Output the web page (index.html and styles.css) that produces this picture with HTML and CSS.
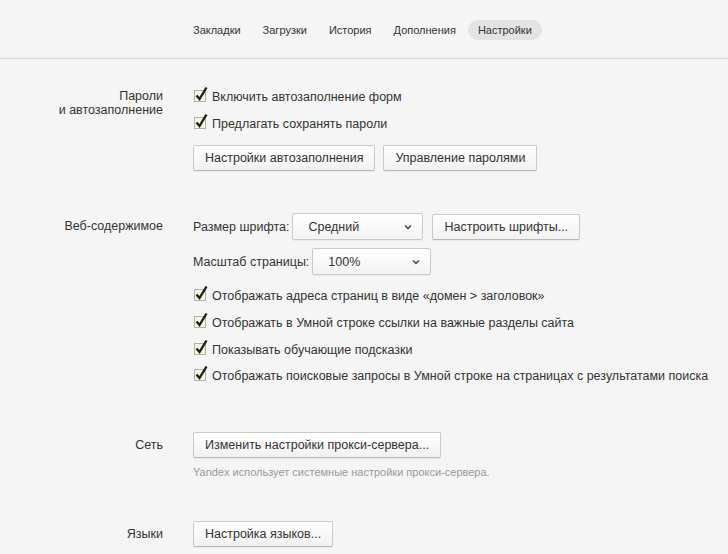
FILE: index.html
```html
<!DOCTYPE html>
<html lang="ru">
<head>
<meta charset="utf-8">
<link rel="stylesheet" href="styles.css">
</head>
<body>
<header class="topbar">
  <nav class="nav">
    <span class="nav-item">Закладки</span>
    <span class="nav-item">Загрузки</span>
    <span class="nav-item">История</span>
    <span class="nav-item">Дополнения</span>
    <span class="nav-item active">Настройки</span>
  </nav>
</header>

<main class="settings">
  <section class="section">
    <div class="label">Пароли<br>и автозаполнение</div>
    <div class="content">
      <label class="check"><svg class="cb" viewBox="0 0 16 17" width="16" height="17"><rect x="1.5" y="4.5" width="11" height="11" fill="#f7f6e4" stroke="#b3b3a3"/><path d="M3.5 9.5 L6.5 13 L13.5 1.5" fill="none" stroke="#202015" stroke-width="2.4"/></svg><span>Включить автозаполнение форм</span></label>
      <label class="check"><svg class="cb" viewBox="0 0 16 17" width="16" height="17"><rect x="1.5" y="4.5" width="11" height="11" fill="#f7f6e4" stroke="#b3b3a3"/><path d="M3.5 9.5 L6.5 13 L13.5 1.5" fill="none" stroke="#202015" stroke-width="2.4"/></svg><span>Предлагать сохранять пароли</span></label>
      <div class="btn-row first-btns">
        <button class="btn">Настройки автозаполнения</button>
        <button class="btn">Управление паролями</button>
      </div>
    </div>
  </section>

  <section class="section">
    <div class="label">Веб-содержимое</div>
    <div class="content">
      <div class="field-row">
        <span class="field-label">Размер шрифта:</span>
        <div class="select w-font"><span>Средний</span><svg class="chev" viewBox="0 0 8 6" width="8" height="6"><path d="M1 1.5 L4 4.5 L7 1.5" fill="none" stroke="#444" stroke-width="1.5"/></svg></div>
        <button class="btn btn-fonts">Настроить шрифты...</button>
      </div>
      <div class="field-row second">
        <span class="field-label">Масштаб страницы:</span>
        <div class="select w-zoom"><span>100%</span><svg class="chev" viewBox="0 0 8 6" width="8" height="6"><path d="M1 1.5 L4 4.5 L7 1.5" fill="none" stroke="#444" stroke-width="1.5"/></svg></div>
      </div>
      <div class="checks">
        <label class="check row2"><svg class="cb" viewBox="0 0 16 17" width="16" height="17"><rect x="1.5" y="4.5" width="11" height="11" fill="#f7f6e4" stroke="#b3b3a3"/><path d="M3.5 9.5 L6.5 13 L13.5 1.5" fill="none" stroke="#202015" stroke-width="2.4"/></svg><span>Отображать адреса страниц в виде «домен &gt; заголовок»</span></label>
        <label class="check row2"><svg class="cb" viewBox="0 0 16 17" width="16" height="17"><rect x="1.5" y="4.5" width="11" height="11" fill="#f7f6e4" stroke="#b3b3a3"/><path d="M3.5 9.5 L6.5 13 L13.5 1.5" fill="none" stroke="#202015" stroke-width="2.4"/></svg><span>Отображать в Умной строке ссылки на важные разделы сайта</span></label>
        <label class="check row2"><svg class="cb" viewBox="0 0 16 17" width="16" height="17"><rect x="1.5" y="4.5" width="11" height="11" fill="#f7f6e4" stroke="#b3b3a3"/><path d="M3.5 9.5 L6.5 13 L13.5 1.5" fill="none" stroke="#202015" stroke-width="2.4"/></svg><span>Показывать обучающие подсказки</span></label>
        <label class="check row2"><svg class="cb" viewBox="0 0 16 17" width="16" height="17"><rect x="1.5" y="4.5" width="11" height="11" fill="#f7f6e4" stroke="#b3b3a3"/><path d="M3.5 9.5 L6.5 13 L13.5 1.5" fill="none" stroke="#202015" stroke-width="2.4"/></svg><span>Отображать поисковые запросы в Умной строке на страницах с результатами поиска</span></label>
      </div>
    </div>
  </section>

  <section class="section">
    <div class="label">Сеть</div>
    <div class="content">
      <div class="btn-row"><button class="btn">Изменить настройки прокси-сервера...</button></div>
      <p class="note">Yandex использует системные настройки прокси-сервера.</p>
    </div>
  </section>

  <section class="section last">
    <div class="label">Языки</div>
    <div class="content">
      <div class="btn-row"><button class="btn">Настройка языков...</button></div>
    </div>
  </section>
</main>
</body>
</html>
```

FILE: styles.css
```css
html, body {
  margin: 0;
  padding: 0;
  background: #f5f5f5;
  color: #333;
  font-family: "Liberation Sans", Arial, sans-serif;
  font-size: 12.5px;
  height: 100%;
  overflow: hidden;
}

.topbar {
  height: 59px;
  border-bottom: 1px solid #d9d9d9;
  box-shadow: 0 -2px 0 -1px #ececec inset;
  box-sizing: border-box;
}

.nav {
  display: flex;
  gap: 2px;
  padding: 20px 0 0 183px;
}

.nav-item {
  font-size: 11px;
  color: #333;
  padding: 3px 10px;
  line-height: 14px;
  border-radius: 10px;
}

.nav-item.active {
  background: #e3e3e3;
}

.settings {
  padding-top: 24px;
}

.section {
  display: grid;
  grid-template-columns: 163px 1fr;
  column-gap: 30px;
  margin-bottom: 42px;
}

.section.last {
  margin-bottom: 0;
}

.label {
  text-align: right;
  line-height: 14px;
  padding-top: 6px;
  color: #333;
}

.content {
  display: flex;
  flex-direction: column;
  align-items: flex-start;
}

.check {
  display: flex;
  align-items: center;
  height: 27px;
  gap: 3px;
  white-space: nowrap;
}

.check.row2 {
  height: 26.7px;
}

.cb {
  display: block;
  margin-top: -5px;
}

.btn-row {
  display: flex;
  gap: 8px;
}

.first-btns {
  margin-top: 8px;
}

.btn {
  font-family: inherit;
  font-size: 12.5px;
  color: #333;
  height: 26px;
  padding: 0 11px;
  border: 1px solid #c9c9c9;
  border-bottom-color: #b8b8b8;
  border-radius: 2px;
  background: linear-gradient(#ffffff, #f1f1f1);
  box-shadow: 0 1px 1px rgba(0,0,0,0.06);
}

.field-row {
  display: flex;
  align-items: center;
  height: 27px;
}

.field-row.second {
  margin-top: 8px;
}

.field-label {
  margin-right: 3px;
}

.select {
  display: flex;
  align-items: center;
  justify-content: space-between;
  box-sizing: border-box;
  height: 27px;
  padding: 0 10px 0 15px;
  border: 1px solid #c9c9c9;
  border-radius: 2px;
  background: linear-gradient(#ffffff, #f3f3f3);
  box-shadow: 0 1px 1px rgba(0,0,0,0.05);
}

.w-font { width: 131px; }
.w-zoom { width: 119px; }

.btn-fonts {
  margin-left: 9px;
}

.checks {
  margin-top: 8px;
  display: flex;
  flex-direction: column;
}

.note {
  margin: 7px 0 0;
  font-size: 11px;
  line-height: 14px;
  color: #9a9a9a;
}
```
